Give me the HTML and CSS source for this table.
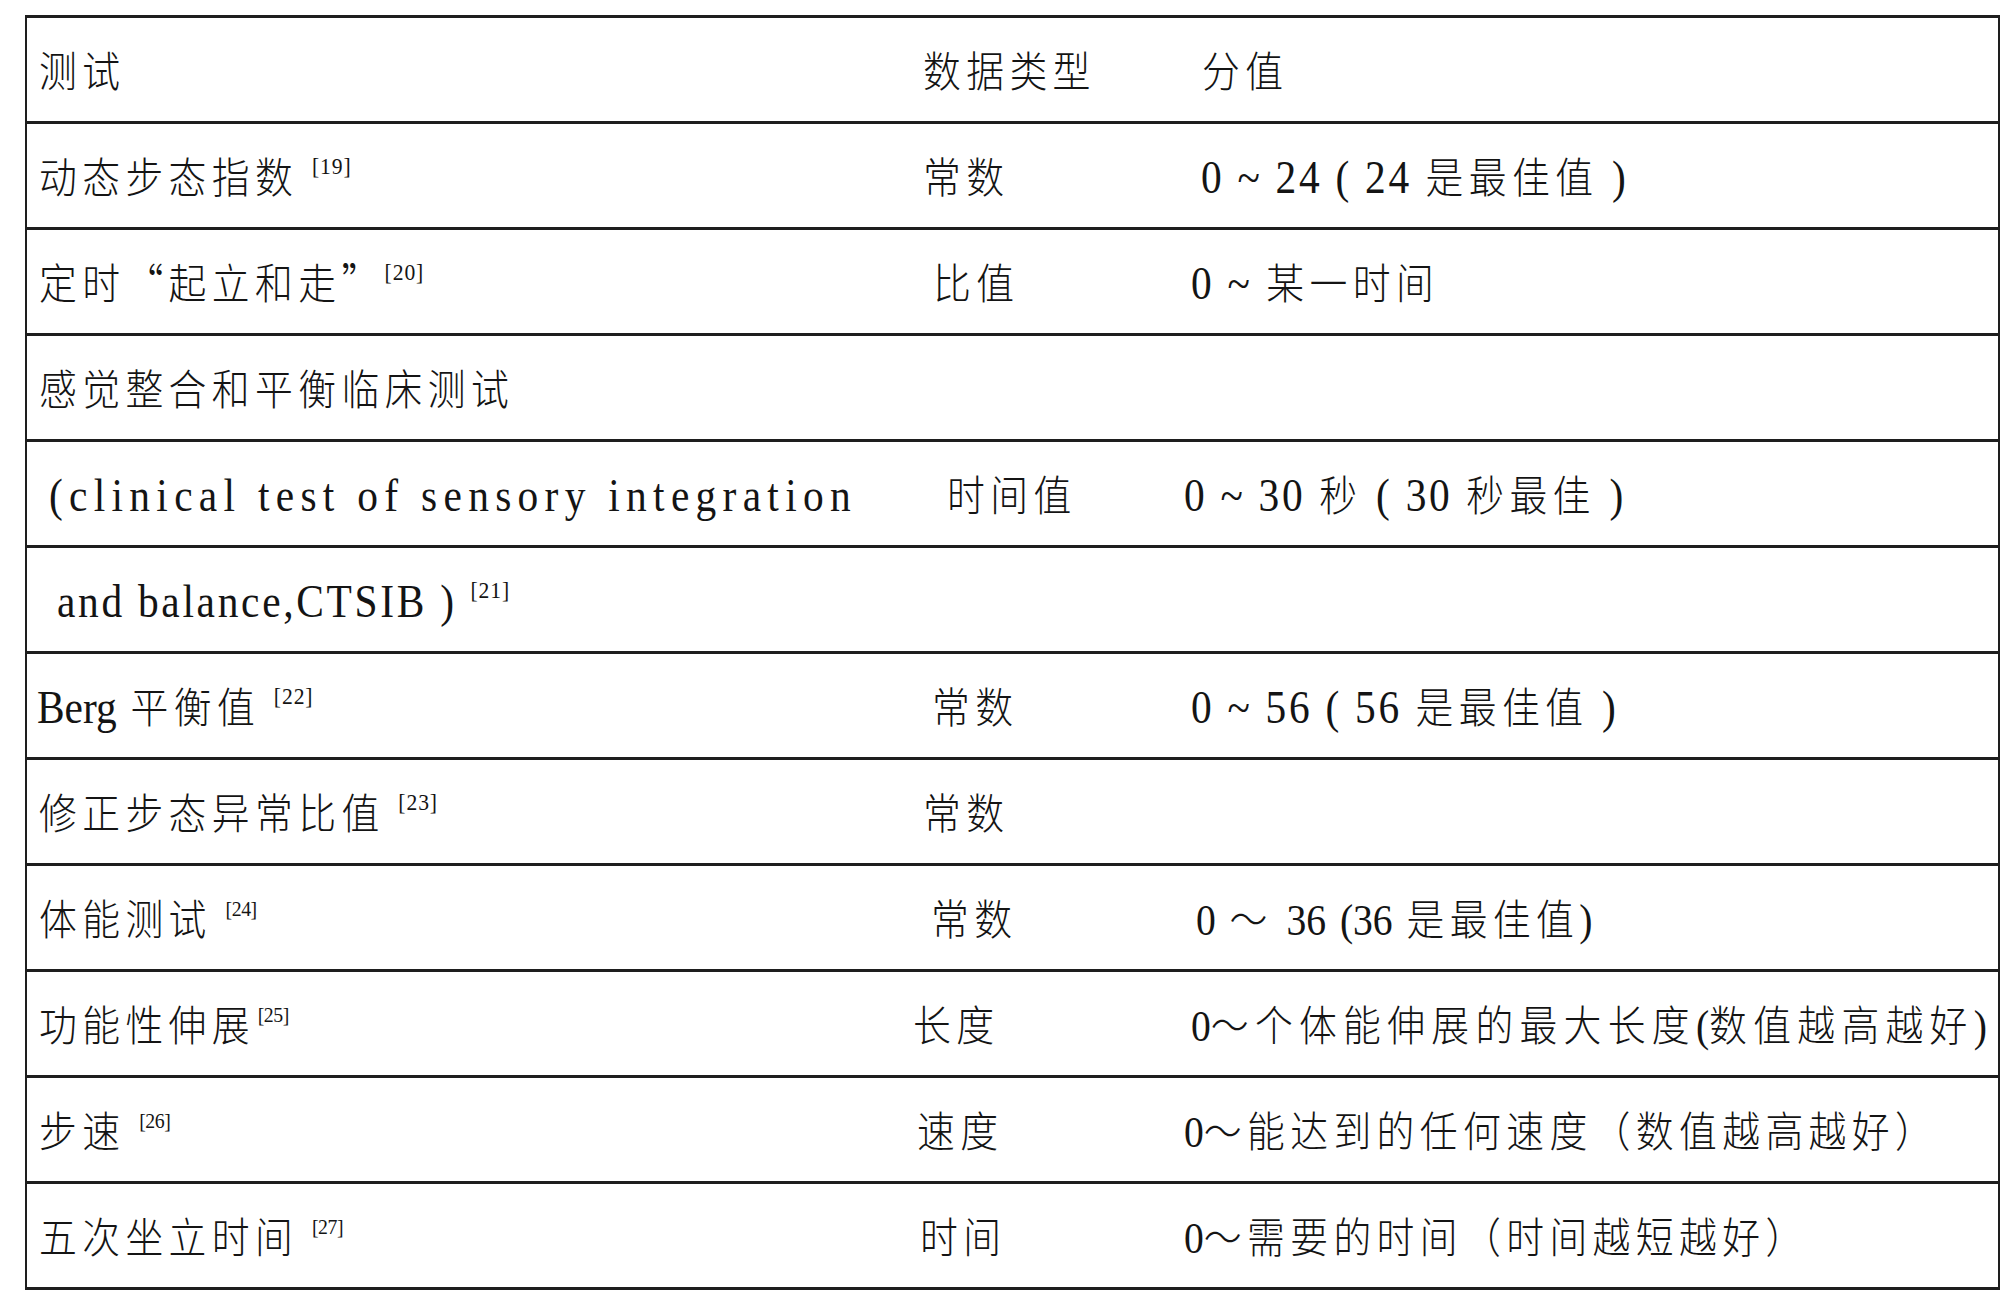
FILE: index.html
```html
<!DOCTYPE html>
<html lang="zh-CN">
<head>
<meta charset="utf-8">
<title>平衡测试</title>
<link rel="stylesheet" href="styles.css">
</head>
<body>
<div class="tbl">
  <div class="row">
    <div class="c1"><span class="t">测试</span></div>
    <div class="c2 x10"><span class="t">数据类型</span></div>
    <div class="c3 x24"><span class="t">分值</span></div>
  </div>
  <div class="row">
    <div class="c1"><span class="t">动态步态指数 <span class="ref">[19]</span></span></div>
    <div class="c2 x10"><span class="t">常数</span></div>
    <div class="c3 x23"><span class="t"><span class="lat">0 ~ 24 ( 24</span> 是最佳值 <span class="lat">)</span></span></div>
  </div>
  <div class="row">
    <div class="c1"><span class="t">定时“起立和走”<span class="ref">[20]</span></span></div>
    <div class="c2 x20"><span class="t">比值</span></div>
    <div class="c3 x13"><span class="t"><span class="lat">0 ~</span> 某一时间</span></div>
  </div>
  <div class="row">
    <div class="c1"><span class="t">感觉整合和平衡临床测试</span></div>
    <div class="c2"></div>
    <div class="c3"></div>
  </div>
  <div class="row">
    <div class="c1 x22"><span class="t"><span class="lat wide">(clinical test of sensory integration</span></span></div>
    <div class="c2 x34"><span class="t">时间值</span></div>
    <div class="c3 x6"><span class="t"><span class="lat">0 ~ 30</span> 秒 <span class="lat">( 30</span> 秒最佳 <span class="lat">)</span></span></div>
  </div>
  <div class="row">
    <div class="c1 x30"><span class="t"><span class="lat mid">and balance,CTSIB )</span> <span class="ref">[21]</span></span></div>
    <div class="c2"></div>
    <div class="c3"></div>
  </div>
  <div class="row">
    <div class="c1 x9"><span class="t"><span class="lat berg">Berg</span> 平衡值 <span class="ref">[22]</span></span></div>
    <div class="c2 x19"><span class="t">常数</span></div>
    <div class="c3 x13"><span class="t"><span class="lat">0 ~ 56 ( 56</span> 是最佳值 <span class="lat">)</span></span></div>
  </div>
  <div class="row">
    <div class="c1"><span class="t">修正步态异常比值 <span class="ref">[23]</span></span></div>
    <div class="c2 x10"><span class="t">常数</span></div>
    <div class="c3"></div>
  </div>
  <div class="row">
    <div class="c1"><span class="t">体能测试 <span class="ref tight">[24]</span></span></div>
    <div class="c2 x18"><span class="t">常数</span></div>
    <div class="c3 x18"><span class="t"><span class="lat tight">0</span> ～ <span class="lat tight">36</span> <span class="lat tight">(36</span> 是最佳值<span class="lat tight">)</span></span></div>
  </div>
  <div class="row">
    <div class="c1"><span class="t">功能性伸展<span class="ref tight close">[25]</span></span></div>
    <div class="c2"><span class="t">长度</span></div>
    <div class="c3 x13"><span class="t spread"><span class="lat tight">0</span>～个体能伸展的最大长度<span class="lat tight">(</span>数值越高越好<span class="lat tight">)</span></span></div>
  </div>
  <div class="row">
    <div class="c1"><span class="t">步速 <span class="ref tight">[26]</span></span></div>
    <div class="c2 x4"><span class="t">速度</span></div>
    <div class="c3 x6"><span class="t"><span class="lat tight">0</span>～能达到的任何速度（数值越高越好）</span></div>
  </div>
  <div class="row">
    <div class="c1"><span class="t">五次坐立时间 <span class="ref tight">[27]</span></span></div>
    <div class="c2 x7"><span class="t">时间</span></div>
    <div class="c3 x6"><span class="t"><span class="lat tight">0</span>～需要的时间（时间越短越好）</span></div>
  </div>
</div>
</body>
</html>
```

FILE: styles.css
```css
html, body {
  margin: 0;
  padding: 0;
  background: #ffffff;
}

body {
  color: #141414;
  font-family: "Noto Sans CJK SC", "Noto Sans CJK TC", sans-serif;
  font-weight: 300;
  font-size: 42px;
  letter-spacing: 6px;
}

.tbl {
  margin: 15px 0 0 25px;
  width: 1975px;
  box-sizing: border-box;
  border-style: solid;
  border-color: #1e1e1e;
  border-width: 3px 2px 0 2px;
}

.row {
  display: grid;
  grid-template-columns: 885px 266px minmax(0, 1fr);
  height: 106px;
  box-sizing: border-box;
  border-bottom: 3px solid #1e1e1e;
  align-items: center;
}

.c1, .c2, .c3 {
  white-space: nowrap;
  line-height: 1.2;
  min-width: 0;
}

.t {
  display: inline-block;
  transform: scaleX(0.9);
  transform-origin: 0 50%;
}

.t.spread {
  letter-spacing: 7px;
}

.c1 { padding-left: 12px; }
.c2 { padding-left: 1px; }
.c3 { padding-left: 0; }

.c1.x9 { padding-left: 10px; }
.c1.x22 { padding-left: 22px; }
.c1.x30 { padding-left: 30px; }

.c2.x4 { padding-left: 5px; }
.c2.x7 { padding-left: 8px; }
.c2.x10 { padding-left: 11px; }
.c2.x18 { padding-left: 19px; }
.c2.x19 { padding-left: 20px; }
.c2.x20 { padding-left: 21px; }
.c2.x34 { padding-left: 35px; }

.c3.x6 { padding-left: 6px; }
.c3.x13 { padding-left: 13px; }
.c3.x18 { padding-left: 18px; }
.c3.x23 { padding-left: 23px; }
.c3.x24 { padding-left: 24px; }

.lat {
  font-family: "Liberation Serif", serif;
  font-weight: 400;
  font-size: 46px;
  line-height: 1;
  letter-spacing: 3px;
}

.lat.wide {
  letter-spacing: 7px;
}

.lat.mid {
  letter-spacing: 3px;
}

.lat.berg {
  letter-spacing: 0;
}

.lat.tight {
  font-size: 44px;
  letter-spacing: 0;
}

.ref {
  font-family: "Liberation Serif", serif;
  font-weight: 400;
  font-size: 24px;
  line-height: 1;
  letter-spacing: 1px;
  vertical-align: 19px;
}

.ref.tight {
  font-size: 22px;
  letter-spacing: -0.5px;
}

.ref.close {
  margin-left: 3px;
}
```
